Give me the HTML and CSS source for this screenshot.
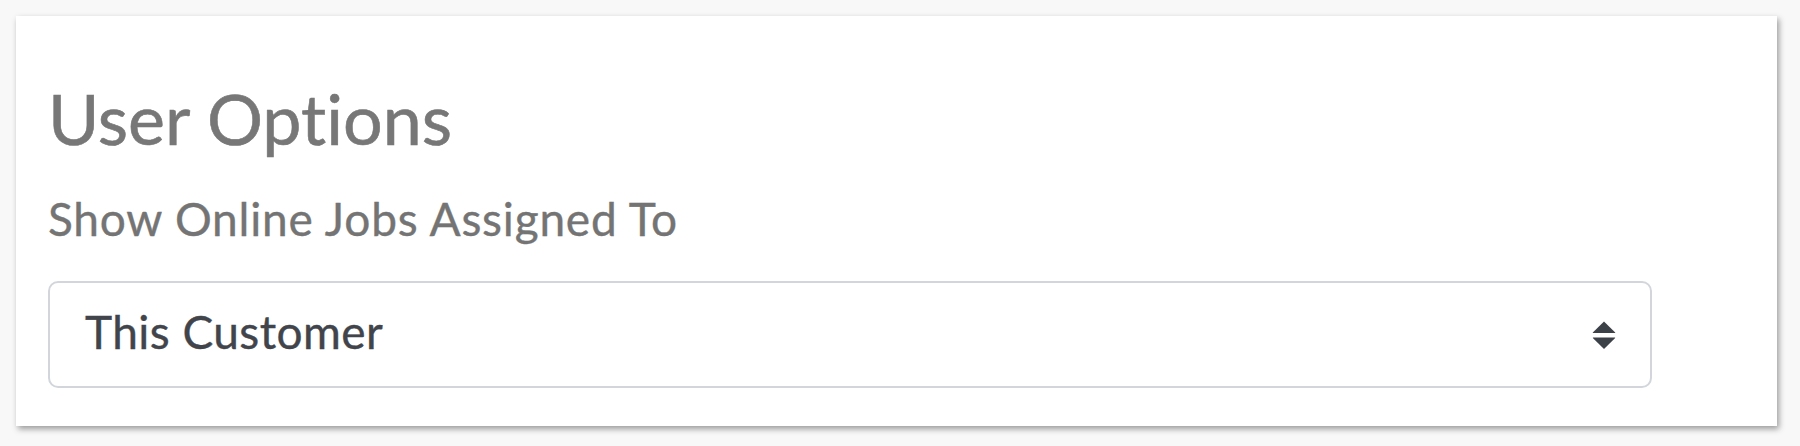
FILE: index.html
```html
<!DOCTYPE html>
<html lang="en">
<head>
<meta charset="utf-8">
<title>User Options</title>
<link rel="stylesheet" href="styles.css">
</head>
<body>
  <div class="card">
    <h2 class="title">User Options</h2>
    <div class="field">
      <label class="field-label">Show Online Jobs Assigned To</label>
      <div class="select">
        <span class="select-value">This Customer</span>
        <svg class="select-arrow" width="24" height="28" viewBox="0 0 24 28" aria-hidden="true">
          <path d="M12 0.5 L23.2 11.6 Q23.6 12 23 12 H1 Q0.4 12 0.8 11.6 Z" fill="#3c4147"/>
          <path d="M1 16.5 H23 Q23.6 16.5 23.2 16.9 L12 28 L0.8 16.9 Q0.4 16.5 1 16.5 Z" fill="#3c4147"/>
        </svg>
      </div>
    </div>
  </div>
</body>
</html>
```

FILE: styles.css
```css
html, body {
  margin: 0;
  padding: 0;
}

body {
  background: #f8f8f8;
  width: 1800px;
  height: 446px;
  padding: 16px 0 0 16px;
  box-sizing: border-box;
  font-family: Lato, "Open Sans", sans-serif;
  font-variant-ligatures: none;
  font-feature-settings: "liga" 0, "clig" 0;
}

.card {
  width: 1761px;
  height: 410px;
  box-sizing: border-box;
  background: #ffffff;
  padding: 60px 0 0 32px;
  box-shadow: 2px 3px 6px rgba(0, 0, 0, 0.38);
}

.title {
  margin: 0;
  font-size: 70px;
  line-height: 84px;
  font-weight: 400;
  color: #777777;
  -webkit-text-stroke: 0.6px #777777;
}

.field {
  width: 1604px;
  margin-top: 31px;
}

.field-label {
  display: block;
  font-size: 46px;
  line-height: 55px;
  letter-spacing: 0.8px;
  color: #747474;
  -webkit-text-stroke: 0.4px #747474;
}

.select {
  margin-top: 35px;
  height: 107px;
  box-sizing: border-box;
  border: 2px solid #d2d6dc;
  border-radius: 10px;
  display: flex;
  align-items: center;
  justify-content: space-between;
  padding: 0 34px 0 35px;
}

.select-value {
  font-size: 46px;
  line-height: 55px;
  letter-spacing: 0.45px;
  color: #41454b;
  -webkit-text-stroke: 0.4px #41454b;
  padding-bottom: 6px;
}

.select-arrow {
  display: block;
}
```
